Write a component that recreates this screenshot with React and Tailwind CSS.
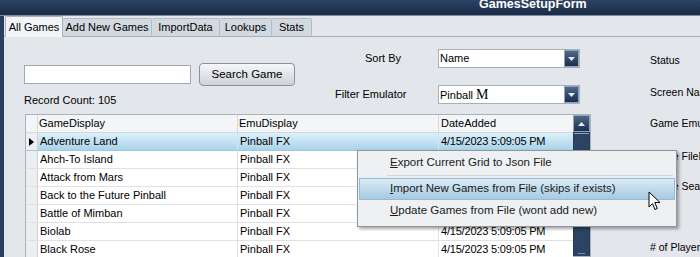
import React from 'react';

const font = { fontFamily: '"Liberation Sans", Arial, sans-serif' };

const rows = [
  'Adventure Land',
  'Ahch-To Island',
  'Attack from Mars',
  'Back to the Future Pinball',
  'Battle of Mimban',
  'Biolab',
  'Black Rose',
];

const tabs = [
  { label: 'All Games', w: 'w-[58px]' },
  { label: 'Add New Games', w: 'w-[89px]' },
  { label: 'ImportData', w: 'w-[68px]' },
  { label: 'Lookups', w: 'w-[52px]' },
  { label: 'Stats', w: 'w-[40px]' },
];

const DropButton = () => (
  <div className="w-[15px] h-[17px] shrink-0 bg-gradient-to-b from-[#50698b] to-[#1c2f4e] border border-[#90a4bc] flex items-center justify-center">
    <svg width="7" height="4" viewBox="0 0 7 4"><path d="M0 0h7L3.5 4z" fill="#e8eef5" /></svg>
  </div>
);

const Combo = ({ children }) => (
  <div className="w-[142px] h-[19px] shrink-0 bg-white border border-[#a7b0ba] flex items-center justify-between pl-[1px]">
    <span className="text-[11px] text-black leading-none">{children}</span>
    <DropButton />
  </div>
);

const Grid = () => (
  <div className="w-[566px] shrink-0 border border-[#a9b3bd] bg-white flex text-[11px] text-black">
    <div className="flex-1">
      <div className="flex h-[18px] bg-[#f4f5f6] border-b border-[#d5d9dd]">
        <div className="w-[12px] border-r border-[#d5d9dd]" />
        <div className="w-[200px] pl-[1px] flex items-center border-r border-[#d5d9dd]">GameDisplay</div>
        <div className="w-[201px] pl-[1px] flex items-center border-r border-[#d5d9dd]">EmuDisplay</div>
        <div className="flex-1 pl-[2px] flex items-center">DateAdded</div>
      </div>
      {rows.map((r, i) => (
        <div
          key={r}
          className={`flex h-[18px] border-b ${i === 0 ? 'bg-gradient-to-b from-[#dcf0fa] to-[#a9d3e8] border-[#9ec8de]' : 'bg-white border-[#dfe2e5]'}`}
        >
          <div className="w-[12px] bg-[#eceef0] border-r border-[#d0d4d8] flex items-center justify-center">
            {i === 0 && <svg width="5" height="8" viewBox="0 0 5 8"><path d="M0 0l5 4-5 4z" fill="#000" /></svg>}
          </div>
          <div className="w-[200px] pl-[2px] flex items-center border-r border-[#dfe2e5]">{r}</div>
          <div className="w-[201px] pl-[2px] flex items-center border-r border-[#dfe2e5]">Pinball FX</div>
          <div className="flex-1 pl-[2px] flex items-center tracking-[-0.2px] whitespace-nowrap">4/15/2023 5:09:05 PM</div>
        </div>
      ))}
    </div>
    <div className="w-[17px] bg-[#263b5a] flex flex-col items-center">
      <div className="w-[17px] h-[17px] bg-gradient-to-b from-[#50698b] to-[#1c2f4e] border border-[#90a4bc] flex items-center justify-center">
        <svg width="7" height="4" viewBox="0 0 7 4"><path d="M0 4h7L3.5 0z" fill="#e8eef5" /></svg>
      </div>
      <div className="w-[15px] flex-1 mt-[1px] bg-[#2c4364] border-t border-[#8fa3bb] flex flex-col justify-end items-center pb-[2px]">
        <div className="w-[7px] h-[1px] bg-[#7d90a8]" />
      </div>
    </div>
  </div>
);

const Cursor = () => (
  <svg width="14" height="20" viewBox="0 0 14 20" className="absolute left-[648px] top-[191px]">
    <path d="M1 1v15l3.5-3.5 2.5 6 2.3-1-2.5-6H12z" fill="#fff" stroke="#000" strokeWidth="1" strokeLinejoin="round" />
  </svg>
);

const ContextMenu = () => (
  <div className="absolute left-[357px] top-[150px] w-[320px] h-[77px] bg-[#eef0f2] border border-[#8d969f] shadow-[2px_2px_3px_rgba(0,0,0,0.35)] text-[11.5px] text-[#1a1a1a] flex flex-col pt-[1px] px-[1px]">
    <div className="h-[21px] flex items-center pl-[31px]"><span><u>E</u>xport Current Grid to Json File</span></div>
    <div className="h-[1px] bg-[#d2d6db] ml-[28px] mr-[2px] my-[2px]" />
    <div className="h-[22px] flex items-center pl-[30px] border border-[#93bcd6] bg-gradient-to-b from-[#dcecf6] to-[#a6cae0]"><span><u>I</u>mport New Games from File (skips if exists)</span></div>
    <div className="h-[22px] flex items-center pl-[31px]"><span><u>U</u>pdate Games from File (wont add new)</span></div>
  </div>
);

export default function App() {
  return (
    <div className="relative w-[700px] h-[257px] overflow-hidden bg-[#e3e6ea] flex flex-col text-[11px] text-black" style={font}>
      <div className="h-[15px] shrink-0 bg-gradient-to-b from-[#2d4364] to-[#1a2b47] flex items-start pl-[479px] overflow-hidden">
        <span className="text-white font-bold text-[12.5px] leading-none -mt-[2px]">GamesSetupForm</span>
      </div>
      <div className="h-[1px] shrink-0 bg-[#7c8ea6]" />
      <div className="flex flex-1 min-h-0">
        <div className="w-[4px] shrink-0 bg-[#2a3f5f]" />
        <div className="flex-1 min-w-0 flex flex-col">
          <div className="h-[21px] shrink-0 flex items-end border-b border-[#a8b0b9] pl-[1px]">
            {tabs.map((t, i) => (
              <div
                key={t.label}
                className={`${t.w} shrink-0 flex items-center justify-center rounded-t-[2px] ${
                  i === 0
                    ? 'h-[21px] bg-[#f3f4f5] border border-b-0 border-[#a8b0b9] -mb-[1px] relative'
                    : 'h-[18px] bg-[#d3d9e0] border border-b-0 border-l-0 border-[#b3bbc4]'
                }`}
              >
                {t.label}
              </div>
            ))}
          </div>
          <div className="flex flex-1 min-h-0">
            <div className="w-[642px] shrink-0 flex flex-col">
              <div className="h-[77px] shrink-0 flex">
                <div className="w-[310px] shrink-0 pl-[20px] flex flex-col">
                  <div className="flex items-center gap-[8px] mt-[26px]">
                    <div className="w-[167px] h-[19px] bg-white border border-[#a0a8b2]" />
                    <div className="w-[96px] h-[23px] rounded-[4px] border border-[#8a939c] bg-gradient-to-b from-[#f6f7f8] to-[#cdd2d7] flex items-center justify-center text-[11.5px]">Search Game</div>
                  </div>
                  <div className="mt-[6px] pl-[0px]">Record Count: 105</div>
                </div>
                <div className="flex flex-col pt-[12px]">
                  <div className="flex items-center h-[19px]">
                    <span className="w-[124px] pl-[51px]">Sort By</span>
                    <Combo>Name</Combo>
                  </div>
                  <div className="flex items-center h-[19px] mt-[17px]">
                    <span className="w-[124px] pl-[21px]">Filter Emulator</span>
                    <Combo>Pinball <span className="text-[14px]" style={{ fontFamily: '"Liberation Serif", serif' }}>M</span></Combo>
                  </div>
                </div>
              </div>
              <div className="pl-[21px] flex-1 min-h-0 flex">
                <Grid />
              </div>
            </div>
            <div className="flex-1 min-w-0 overflow-hidden flex flex-col pl-[4px] pt-[14px] text-[10.5px]">
              <div className="h-[20px] flex items-center">Status</div>
              <div className="h-[20px] mt-[13px] flex items-center whitespace-nowrap">Screen Name</div>
              <div className="h-[20px] mt-[12px] flex items-center whitespace-nowrap">Game Emulator</div>
              <div className="h-[20px] mt-[14px] flex items-center whitespace-nowrap">Game FileName</div>
              <div className="h-[20px] mt-[11px] flex items-center whitespace-nowrap">Game Search</div>
              <div className="h-[20px] mt-[42px] flex items-center whitespace-nowrap"># of Players</div>
            </div>
          </div>
        </div>
      </div>
      <ContextMenu />
      <Cursor />
    </div>
  );
}
